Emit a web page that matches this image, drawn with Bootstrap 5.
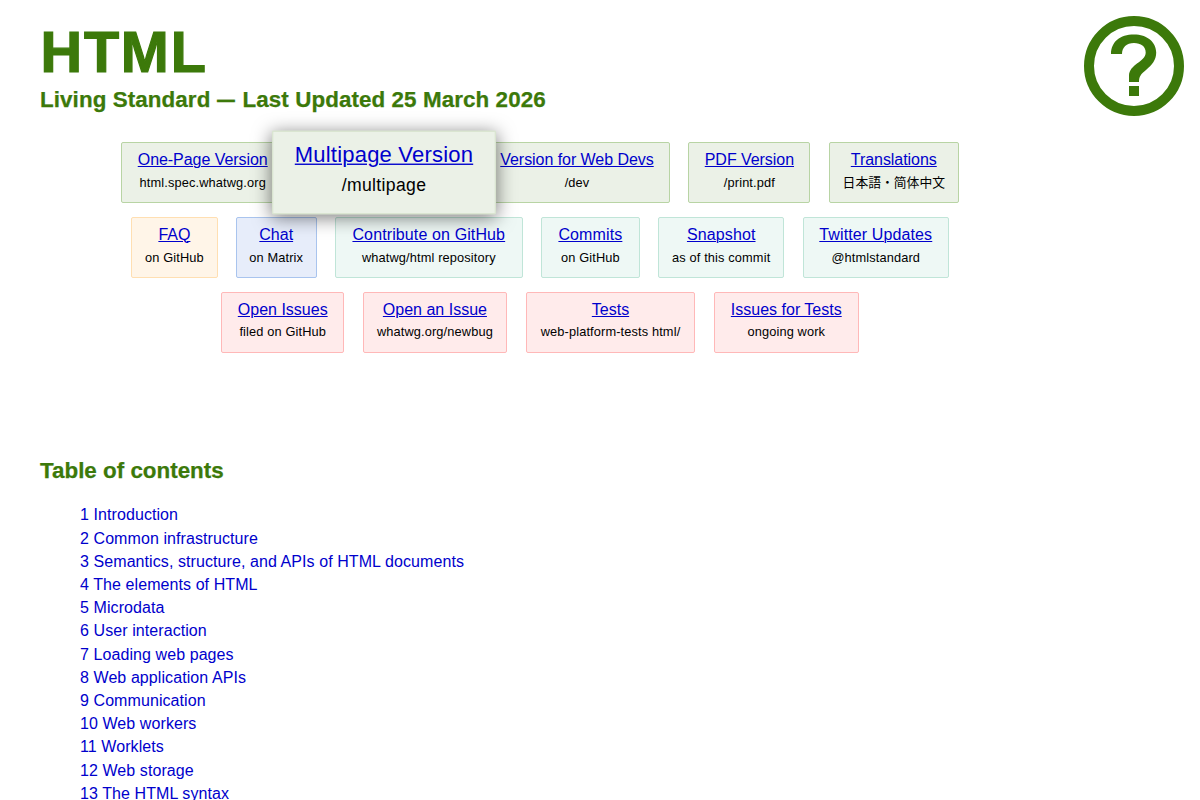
<!DOCTYPE html>
<html lang="en">
<head>
<meta charset="utf-8">
<title>HTML Standard</title>
<link href="https://cdn.jsdelivr.net/npm/bootstrap@5.3.0/dist/css/bootstrap.min.css" rel="stylesheet">
<style>
html,body{height:800px;overflow:hidden}
body{font-family:"Liberation Sans","Noto Sans CJK JP",sans-serif;font-size:16px;color:#000;background:#fff;line-height:23.18px}
a{color:#0000cc}
h1,h2{color:#3c790a;font-weight:700;margin:0}
h1{font-size:57.6px;line-height:60px;letter-spacing:1.8px;padding-left:.5px;-webkit-text-stroke:1.2px #3c790a}
h2{font-size:22.4px;line-height:28px;-webkit-text-stroke:.25px #3c790a}
.sub{padding-top:4px;letter-spacing:.08px}
.sub .dash{display:inline-block;width:19.5px;transform:scaleX(.8);transform-origin:left}
.page-top{padding:22px 16px 0 40px;height:142px}
.page-top svg{width:100px;height:100px;margin-top:-6px}
.versions{width:1080px;height:315px}
.link-row{gap:18.4px;margin-bottom:14px}
.tile{height:61px;border:1px solid;border-radius:2px;padding-top:6px;white-space:nowrap;flex:none;line-height:22px}
.tile a{text-underline-offset:1px;text-decoration-thickness:1px}
.tile span{font-size:12.8px;line-height:24px;letter-spacing:.13px}
.tile.green{background:#ebf1e7;border-color:#b8d4a4}
.tile.green a{letter-spacing:-.05px}
.tile.orange{background:#fff5e8;border-color:#ffdfb2}
.tile.blue{background:#e7edfa;border-color:#a9c4ee}
.tile.teal{background:#eef8f5;border-color:#c0e5d8}
.tile.teal a{letter-spacing:.12px}
.tile.red{background:#ffebeb;border-color:#ffb8b8}
.tile.red span{line-height:22px}
.tile.zoomed{transform:translateX(-.5px) scale(1.375);z-index:2;position:relative;border-color:#dae5d1;border-radius:1px;box-shadow:0 2px 13px rgba(0,0,0,.5)}
.tile.zoomed a{letter-spacing:.15px}
.tile.zoomed span{line-height:22.8px;letter-spacing:.25px}
.tile .cjk{letter-spacing:0}
.w81{width:80.6px}.w86{width:86.3px}.w99{width:98.6px}.w122{width:122px}.w123{width:123px}.w126{width:126.3px}.w130{width:130px}.w144{width:144.6px}.w145{width:145px}.w146{width:146px}.w163{width:163px}.w170{width:169.8px}.w186{width:186px}.w188{width:187.8px}
.toc-title{margin-left:40px}
.toc{padding:18.45px 0 0 80px}
.toc a{text-decoration:none;letter-spacing:.08px}
</style>
</head>
<body>
<header class="page-top d-flex justify-content-between align-items-start">
<div><h1>HTML</h1><h2 class="sub">Living Standard <span class="dash">—</span> Last Updated 25 March 2026</h2></div>
<svg viewBox="0 0 100 100" fill="#3c790a" role="img" aria-label="WHATWG"><circle cx="50" cy="50" r="45" fill="#fff" stroke="#3c790a" stroke-width="10"/><path d="M27 38C27 26 36 18.5 50 18.5C63 18.5 72.2 26 72.2 36.5C72.2 44 68 49 62 54C57 58 55 60.5 55 66H45V60C45 48 61.7 46 61.7 36.5C61.7 30.5 57 27 50 27C42.5 27 38 31.5 38 38ZM45 70H55V80H45Z"/></svg>
</header>
<nav class="versions text-center">
<div class="link-row d-flex justify-content-center">
<div class="tile green d-flex flex-column align-items-center w163"><a href="#">One-Page Version</a><span>html.spec.whatwg.org</span></div>
<div class="tile green zoomed d-flex flex-column align-items-center w163"><a href="#">Multipage Version</a><span>/multipage</span></div>
<div class="tile green d-flex flex-column align-items-center w186"><a href="#">Version for Web Devs</a><span>/dev</span></div>
<div class="tile green d-flex flex-column align-items-center w122"><a href="#">PDF Version</a><span>/print.pdf</span></div>
<div class="tile green d-flex flex-column align-items-center w130"><a href="#">Translations</a><span class="cjk">日本語・简体中文</span></div>
</div>
<div class="link-row d-flex justify-content-center">
<div class="tile orange d-flex flex-column align-items-center w86"><a href="#">FAQ</a><span>on GitHub</span></div>
<div class="tile blue d-flex flex-column align-items-center w81"><a href="#">Chat</a><span>on Matrix</span></div>
<div class="tile teal d-flex flex-column align-items-center w188"><a href="#">Contribute on GitHub</a><span>whatwg/html repository</span></div>
<div class="tile teal d-flex flex-column align-items-center w99"><a href="#">Commits</a><span>on GitHub</span></div>
<div class="tile teal d-flex flex-column align-items-center w126"><a href="#">Snapshot</a><span>as of this commit</span></div>
<div class="tile teal d-flex flex-column align-items-center w146"><a href="#">Twitter Updates</a><span>@htmlstandard</span></div>
</div>
<div class="link-row d-flex justify-content-center">
<div class="tile red d-flex flex-column align-items-center w123"><a href="#">Open Issues</a><span>filed on GitHub</span></div>
<div class="tile red d-flex flex-column align-items-center w144"><a href="#">Open an Issue</a><span>whatwg.org/newbug</span></div>
<div class="tile red d-flex flex-column align-items-center w170"><a href="#">Tests</a><span>web-platform-tests html/</span></div>
<div class="tile red d-flex flex-column align-items-center w145"><a href="#">Issues for Tests</a><span>ongoing work</span></div>
</div>
</nav>
<main>
<h2 class="toc-title">Table of contents</h2>
<ol class="toc list-unstyled mb-0">
<li><a href="#">1 Introduction</a></li>
<li><a href="#">2 Common infrastructure</a></li>
<li><a href="#">3 Semantics, structure, and APIs of HTML documents</a></li>
<li><a href="#">4 The elements of HTML</a></li>
<li><a href="#">5 Microdata</a></li>
<li><a href="#">6 User interaction</a></li>
<li><a href="#">7 Loading web pages</a></li>
<li><a href="#">8 Web application APIs</a></li>
<li><a href="#">9 Communication</a></li>
<li><a href="#">10 Web workers</a></li>
<li><a href="#">11 Worklets</a></li>
<li><a href="#">12 Web storage</a></li>
<li><a href="#">13 The HTML syntax</a></li>
</ol>
</main>
<script src="https://cdn.jsdelivr.net/npm/bootstrap@5.3.0/dist/js/bootstrap.bundle.min.js"></script>
</body>
</html>
